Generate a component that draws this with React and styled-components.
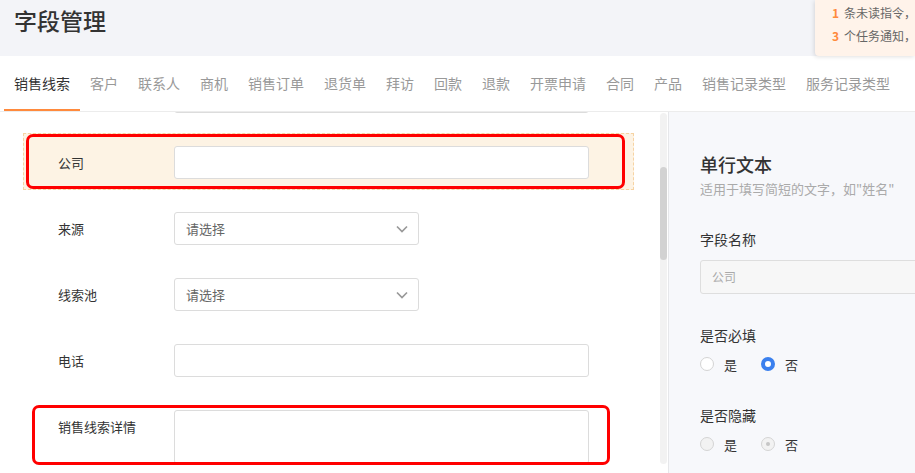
import React from 'react';
import styled, { createGlobalStyle } from 'styled-components';

const GlobalStyle = createGlobalStyle`
  html, body {
    margin: 0;
    padding: 0;
    background: #fff;
  }
  body {
    font-family: "Noto Sans CJK SC", "Noto Sans", sans-serif;
    color: #333;
  }
  * {
    box-sizing: border-box;
  }
`;

const Page = styled.div`
  width: 915px;
  height: 473px;
  overflow: hidden;
  display: flex;
  flex-direction: column;
`;

const Header = styled.header`
  position: relative;
  flex: 0 0 56px;
  background: #f3f4f8;
  padding: 4px 14px 0;
`;

const Title = styled.h1`
  margin: 0;
  font-size: 23px;
  line-height: 32px;
  font-weight: 500;
  color: #333;
`;

// toast in the top right corner, lies over the header
const Notice = styled.div`
  position: absolute;
  top: 0;
  right: 0;
  width: 100px;
  height: 56px;
  padding: 1px 0 0 17px;
  background: #fff3ea;
  border-bottom-left-radius: 4px;
  box-shadow: -1px 1px 4px rgba(0, 0, 0, 0.12);
  font-size: 12px;
  line-height: 23px;
  color: #666;
  white-space: nowrap;
  overflow: hidden;
`;

const Count = styled.b`
  color: #ff8a3d;
  margin-right: 5px;
`;

const Tabs = styled.nav`
  flex: 0 0 56px;
  display: flex;
  align-items: flex-start;
  padding-left: 4px;
  border-bottom: 1px solid #ececec;
`;

const Tab = styled.div`
  height: 55px;
  display: flex;
  align-items: center;
  padding: 1px 10px 0;
  font-size: 14px;
  line-height: 20px;
  white-space: nowrap;
  color: ${p => (p.$active ? '#333' : '#999')};
  border-bottom: 2px solid ${p => (p.$active ? '#ff8a3d' : 'transparent')};
`;

const Body = styled.div`
  flex: 1;
  min-height: 0;
  display: flex;
`;

const Canvas = styled.section`
  position: relative;
  flex: 0 0 668px;
  overflow: hidden;
`;

const FieldList = styled.div`
  margin-top: -45px;
  padding: 0 34px 0 23px;
  display: flex;
  flex-direction: column;
  gap: 9px;
`;

const Row = styled.div`
  position: relative;
  display: flex;
  align-items: ${p => (p.$top ? 'flex-start' : 'center')};
  padding: 12px 44px 10px 34px;
  border: 1px dashed ${p => (p.$selected ? '#f6d3a3' : 'transparent')};
  background: ${p => (p.$selected ? '#fdf3e4' : 'transparent')};
`;

const Label = styled.div`
  flex: 0 0 116px;
  font-size: 13px;
  line-height: 20px;
  color: #333;
  padding-top: ${p => (p.$top ? '7px' : '0')};
`;

const Box = styled.div`
  flex: ${p => (p.$full ? '1' : '0 0 245px')};
  height: ${p => p.$h || 33}px;
  display: flex;
  align-items: center;
  justify-content: space-between;
  padding: 0 10px 0 11px;
  background: #fff;
  border: 1px solid #dcdcdc;
  border-radius: 3px;
  font-size: 13px;
  color: #666;
`;

// red review marks drawn over the form
const Mark = styled.div`
  position: absolute;
  left: ${p => p.$x}px;
  top: ${p => p.$y}px;
  width: ${p => p.$w}px;
  height: ${p => p.$h}px;
  border: 3px solid #ff0000;
  border-radius: 7px;
  pointer-events: none;
`;

const Track = styled.div`
  position: absolute;
  top: 1px;
  right: 1px;
  width: 7px;
  height: 351px;
  border-radius: 4px;
  background: #f2f2f2;
`;

const Thumb = styled.div`
  margin-top: 54px;
  height: 93px;
  border-radius: 4px;
  background: #d2d2d2;
`;

const Inspector = styled.aside`
  flex: 1;
  background: #f7f8fb;
  border-left: 1px solid #e6e7ea;
  padding: 39px 0 0 31px;
  overflow: hidden;
`;

const InspectorTitle = styled.h2`
  margin: 0;
  font-size: 18px;
  line-height: 26px;
  font-weight: 500;
  color: #333;
`;

const Hint = styled.p`
  margin: 2px 0 0;
  font-size: 13px;
  line-height: 20px;
  color: #aaa;
  white-space: nowrap;
`;

const Group = styled.div`
  margin-top: ${p => p.$gap || 31}px;
`;

const GroupLabel = styled.div`
  font-size: 14px;
  line-height: 20px;
  color: #333;
  margin-bottom: ${p => p.$gap || 9}px;
`;

const NameInput = styled.div`
  width: 260px;
  height: 34px;
  padding-left: 11px;
  background: #f7f7f7;
  border: 1px solid #dedede;
  border-radius: 3px;
  font-size: 12px;
  line-height: 32px;
  color: #aaa;
`;

const RadioRow = styled.div`
  display: flex;
  align-items: center;
  height: 20px;
`;

const Option = styled.label`
  display: inline-flex;
  align-items: center;
  gap: 10px;
  margin-right: 24px;
  font-size: 13px;
  color: #333;
`;

const Dot = styled.span`
  position: relative;
  width: 14px;
  height: 14px;
  border-radius: 50%;
  background: ${p => (p.$disabled ? '#f2f2f2' : '#fff')};
  border: ${p => (p.$checked && !p.$disabled ? '4px solid #3b80ee' : '1px solid #d4d4d4')};

  &::after {
    content: '';
    display: ${p => (p.$checked && p.$disabled ? 'block' : 'none')};
    position: absolute;
    left: 4px;
    top: 4px;
    width: 4px;
    height: 4px;
    border-radius: 50%;
    background: #c6c6c6;
  }
`;

const Chevron = () => (
  <svg width="12" height="8" viewBox="0 0 12 8">
    <polyline points="1,1.5 6,6.5 11,1.5" fill="none" stroke="#999" strokeWidth="1.7" />
  </svg>
);

const tabs = ['销售线索', '客户', '联系人', '商机', '销售订单', '退货单', '拜访', '回款', '退款', '开票申请', '合同', '产品', '销售记录类型', '服务记录类型'];

const RadioGroup = ({ value, disabled }) => (
  <RadioRow>
    {['是', '否'].map(opt => (
      <Option key={opt}>
        <Dot $checked={value === opt} $disabled={disabled} />
        {opt}
      </Option>
    ))}
  </RadioRow>
);

const App = () => {
  return (
    <Page>
      <GlobalStyle />
      <Header>
        <Title>字段管理</Title>
        <Notice>
          <div><Count>1</Count>条未读指令，</div>
          <div><Count>3</Count>个任务通知，</div>
        </Notice>
      </Header>
      <Tabs>
        {tabs.map((t, i) => (
          <Tab key={t} $active={i === 0}>{t}</Tab>
        ))}
      </Tabs>
      <Body>
        <Canvas>
          <FieldList>
            {/* row scrolled above the top edge, only its input's bottom edge shows */}
            <Row>
              <Label />
              <Box $full />
            </Row>
            <Row $selected>
              <Label>公司</Label>
              <Box $full />
              <Mark $x={2} $y={0} $w={599} $h={55} />
            </Row>
            <Row>
              <Label>来源</Label>
              <Box>请选择<Chevron /></Box>
            </Row>
            <Row>
              <Label>线索池</Label>
              <Box>请选择<Chevron /></Box>
            </Row>
            <Row>
              <Label>电话</Label>
              <Box $full />
            </Row>
            <Row $top>
              <Label $top>销售线索详情</Label>
              <Box $full $h={54} />
              <Mark $x={8} $y={7} $w={578} $h={60} />
            </Row>
          </FieldList>
          <Track>
            <Thumb />
          </Track>
        </Canvas>
        <Inspector>
          <InspectorTitle>单行文本</InspectorTitle>
          <Hint>适用于填写简短的文字，如"姓名"</Hint>
          <Group $gap={30}>
            <GroupLabel $gap={11}>字段名称</GroupLabel>
            <NameInput>公司</NameInput>
          </Group>
          <Group>
            <GroupLabel>是否必填</GroupLabel>
            <RadioGroup value="否" />
          </Group>
          <Group>
            <GroupLabel>是否隐藏</GroupLabel>
            <RadioGroup value="否" disabled />
          </Group>
        </Inspector>
      </Body>
    </Page>
  );
};

export default App;
